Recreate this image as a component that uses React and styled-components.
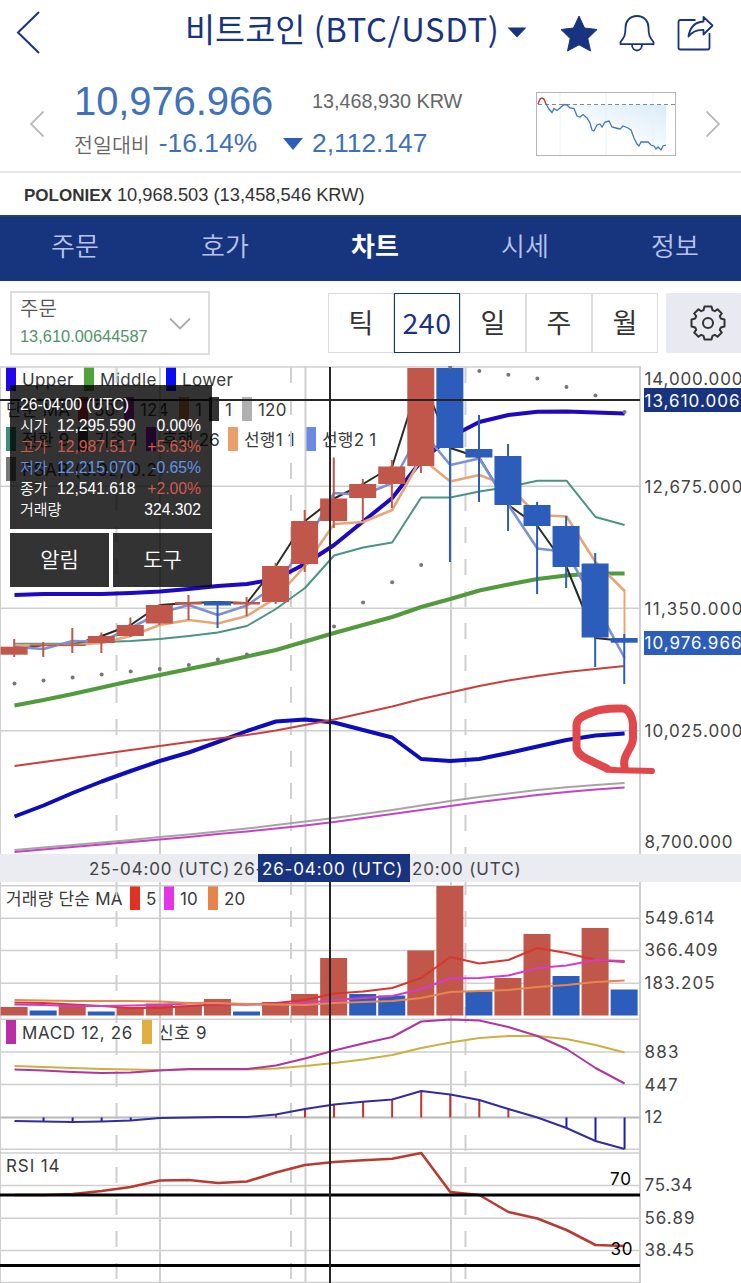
import React from 'react';
import styled, { createGlobalStyle } from 'styled-components';

const navy = '#18337f';
const up = '#c1564a';
const down = '#2c5dba';
const grid = '#cfcfcf';

const GlobalStyle = createGlobalStyle`
  * {
    box-sizing: border-box;
  }

  body {
    margin: 0;
    background: #fff;
    overflow: hidden;
    font-family: 'Liberation Sans', 'Noto Sans CJK KR', sans-serif;
  }

  svg {
    display: block;
  }
`;

// candle columns, one every 29px
const px = (i) => 14.5 + i * 29.05;
const toPoints = (ys) =>
  ys
    .map((y, i) => (y === null ? null : `${px(i).toFixed(1)},${y}`))
    .filter(Boolean)
    .join(' ');

// [open/close top, bottom, high, low, colour]
const candles = [
  [646.7, 654.7, 639, 657, up],
  [644.5, 646, 642, 657, up],
  [644.5, 646, 628, 653, up],
  [636, 643, 632.5, 653, up],
  [625, 636, 617.5, 637, up],
  [605, 623.5, 604, 625, up],
  [602, 604.5, 595, 620, up],
  [601.5, 605.5, 601, 628, down],
  [602, 604.5, 597, 616, up],
  [566, 602, 563, 604, up],
  [521, 564, 510, 572, up],
  [498.5, 521, 457.5, 528, up],
  [484, 498, 479, 520, up],
  [466.5, 484, 460, 508, up],
  [368, 466, 368, 473, up],
  [368, 448, 367, 562, down],
  [449, 457.5, 415, 502, down],
  [456, 505, 444, 531, down],
  [505, 526, 502, 594, down],
  [526, 567, 516, 588, down],
  [563.5, 637.5, 553, 667, down],
  [638, 642.7, 634, 684, down],
];

const upper = [595, 594, 594, 594, 593, 591.5, 589, 586, 584, 579, 564, 545, 521.5, 498, 461, 437, 422, 415, 411.7, 411.5, 412.5, 413.5];
const middle = [705.5, 700, 694, 687.5, 681, 675, 669, 663, 656.5, 650, 641.5, 633, 625, 617, 607, 599, 590.5, 584.5, 579, 575.5, 573.5, 573.5];
const lower = [816.5, 805.5, 793, 781.5, 771, 761, 752.5, 742, 731, 721.5, 719.5, 722.5, 730, 737.5, 759, 761, 759, 753, 746.5, 740, 735.5, 733.5];
const maRed = [766, 762, 758, 754, 750, 746, 742, 738.5, 735, 730.5, 725, 719.5, 713, 706.5, 699, 692.5, 686, 680.5, 676, 672, 669, 666];
const maGrey = [850, 847.5, 845, 842.5, 840, 837, 834.5, 831.5, 828.5, 825, 821.5, 818, 814, 810, 805.5, 801, 797, 793.5, 790, 787.3, 785, 783];
const maPink = [852, 849.5, 847, 844.5, 842, 839.5, 837, 834, 831.5, 828.5, 825.5, 822, 818, 814, 810, 806, 802, 798.5, 795, 792, 789.5, 787.5];
const teal = [643.7, 643.7, 643.5, 642, 641, 639, 636, 632.5, 626, 609, 588, 555.5, 547.5, 542.5, 497.5, 497.5, 491.5, 487, 480.7, 480.7, 517, 525];
const closeLine = [650, 645, 645, 636, 625, 605, 603, 602, 603, 566, 521, 498.5, 484, 466.5, 375, 448, 457.5, 505, 526, 567, 638, 641];
const lead2 = [647, 649, 641, 641.5, 628, 613, 605, 615, 605.5, 585, 545, 493, 495, 483, 430, 465, 458.5, 505, 548.5, 552, 604, 658];
const lead1 = [645, 645, 645, 643, 636, 625, 620, 623.5, 616, 598, 566, 524, 522, 510, 458, 481.5, 475, 486, 515, 516.5, 562, 591];
const psar = [683.5, 680.5, 677.5, 674.5, 671.5, 669, 665, 659.5, 654.5, null, null, 626.5, 602.5, 582.3, 565, 366.7, 371, 374.7, 378.5, 387, 395.5, 412];

const volumes = [
  [1007, up], [1010.5, down], [1004.5, up], [1011.5, down], [1008, up], [1003.5, up],
  [1005.5, up], [999, up], [1011.5, down], [1002, up], [994, up], [958, up],
  [994, down], [995.5, down], [950.5, up], [886, up], [991.5, down], [978, up],
  [934, up], [976, down], [928, up], [989.5, down],
];
const vol5 = [1002.5, 1003, 1004.5, 1006, 1008, 1008, 1006, 1004.5, 1004.5, 1003, 1000, 993.5, 991.5, 988, 978, 957, 963.5, 960, 948, 953, 960, 962];
const vol10 = [1004.5, 1005, 1006, 1006, 1005.5, 1005, 1003.5, 1003.5, 1004.5, 1004.5, 1003, 1000, 998, 996, 989, 978.5, 978, 975.5, 968, 965.5, 960, 961];
const vol20 = [1000, 1000.5, 1001, 1001, 1001, 1001.5, 1003, 1003, 1004, 1004.5, 1005, 1003, 1002, 1001, 998, 992, 991, 990, 987, 985, 982, 980.5];

const macd = [1069.5, 1070.5, 1072, 1073, 1072.5, 1070.5, 1069, 1069, 1069, 1065.5, 1058.5, 1050.5, 1043.5, 1037, 1021.5, 1019.5, 1020.5, 1027, 1036, 1049, 1068, 1083.5];
const signal = [1066, 1067, 1068, 1069, 1069.5, 1070, 1069.5, 1069.5, 1069.5, 1068.5, 1066, 1063, 1059.5, 1055, 1048, 1042.5, 1038, 1036, 1036, 1039, 1045, 1052.5];
const osc = [1121, 1121.5, 1122, 1121.5, 1120.5, 1118, 1117.5, 1117, 1117, 1114.5, 1109, 1104.5, 1101.7, 1099.5, 1091, 1094.5, 1100, 1109, 1117.5, 1128, 1141, 1149];
const rsi = [1195, 1195, 1194, 1191, 1187, 1180.5, 1180, 1183, 1181.5, 1172.5, 1165, 1162, 1160.3, 1158.7, 1153, 1192, 1195, 1212, 1218.5, 1230, 1245, 1246];

const Line = ({ ys, color, w = 2 }) => (
  <polyline points={toPoints(ys)} fill="none" stroke={color} strokeWidth={w} strokeLinejoin="round" />
);

const Grid = ({ rows }) => (
  <g stroke={grid} strokeWidth="2">
    {rows.map((y) => (
      <line key={y} x1="0" x2="641" y1={y} y2={y} strokeWidth="1.6" />
    ))}
    {[0, 160, 305.5, 451, 640].map((x) => (
      <line key={x} x1={x} x2={x} y1="366" y2="1283" />
    ))}
    {[116.5, 291, 465.5].map((x) => (
      <line key={x} x1={x} x2={x} y1="367" y2="1283" strokeDasharray="16 16" />
    ))}
  </g>
);

const Cross = () => <line x1="330" x2="330" y1="367" y2="1283" stroke="#262626" strokeWidth="2" />;

const Price = ({ y, w, fill = '#444', children }) => (
  <text x="644.5" y={y} fontSize="17" fill={fill} textLength={w}>
    {children}
  </text>
);

const Legend = ({ items, spacing }) => (
  <LegendRow $spacing={spacing}>
    {items.map(([color, label, width]) => (
      <LegendItem key={label + width} $width={width}>
        {color && <Swatch $color={color} />}
        {label}
      </LegendItem>
    ))}
  </LegendRow>
);

const App = () => {
  return (
    <Page>
      <GlobalStyle />
      <Header>
        <svg width="26" height="46" fill="none" stroke={navy} strokeWidth="2">
          <path d="M24 2 L3 22.500 L24 43" />
        </svg>
        <Title>
          비트코인 <span>(BTC/USDT)</span>
        </Title>
        <svg width="20" height="13" fill={navy}>
          <path d="M0.500 0.500 H19.500 L10 10.500 Z" />
        </svg>
        <HeaderIcons>
          <svg width="38" height="37" fill={navy}>
            <path
              d="M19 1 L24.500 13 L37 14.500 L27.800 23.500 L30.500 36 L19 29.800 L7.500 36 L10.200 23.500 L1 14.500 L13.500 13 Z"
              stroke={navy}
              strokeLinejoin="round"
            />
          </svg>
          <svg width="36" height="37" fill="none" stroke={navy} strokeWidth="1.8" strokeLinejoin="round">
            <path d="M18 1 C11 1 6.500 6 6.500 12.500 C6.500 20 5.500 22 1.500 27 V29.200 H34.500 V27 C30.500 22 29.500 20 29.500 12.500 C29.500 6 25 1 18 1 Z" />
            <path d="M13 29.500 C13 37.500 23 37.500 23 29.500" />
          </svg>
          <svg width="38" height="37" fill="none" stroke={navy} strokeWidth="1.8" strokeLinejoin="round">
            <path d="M18.500 5 H3.500 Q1.500 5 1.500 7 V32.500 Q1.500 34.500 3.500 34.500 H30.500 Q32.500 34.500 32.500 32.500 V18" />
            <path d="M26.500 2 L35.500 10.500 L26.500 19.500 V15 C20 14.500 15.500 16.500 11.500 21.500 C13 12 18.500 7 26.500 6.500 Z" />
          </svg>
        </HeaderIcons>
      </Header>

      <PriceBar>
        <svg width="16" height="28" fill="none" stroke="#bbb" strokeWidth="1.8">
          <path d="M14.500 1.500 L2 14 L14.500 26.500" />
        </svg>
        <PriceInfo>
          <BigPrice>10,976.966</BigPrice>
          <Krw>13,468,930 KRW</Krw>
          <Change>
            <small>전일대비</small>-16.14%
          </Change>
          <Change>
            <svg width="20" height="12" fill={down}>
              <path d="M0 0 H20 L10 12 Z" />
            </svg>
            2,112.147
          </Change>
        </PriceInfo>
        <MiniChart viewBox="0 0 140 64">
          <defs>
            <linearGradient id="fade" x1="0" x2="1" y1="1" y2="0">
              <stop offset="0.35" stopColor="#fff" />
              <stop offset="1" stopColor="#d8ebf8" />
            </linearGradient>
          </defs>
          <path d="M11 12.500 L16 20 L29 13 L42 22 L57 39 L72 30 L98 36 L103 54 L110 50 L122 57 L130 53 V12.500 Z" fill="url(#fade)" />
          <path d="M24 1 V63 M70 1 V63 M117 1 V63" stroke="#edf0f3" />
          <path d="M2 12.500 H139" stroke="#888" strokeDasharray="4 3" />
          <path d="M2 12 L4 7 L6 6 L8 7 L10 12" fill="none" stroke="#c0392b" strokeWidth="1.4" />
          <path
            d="M10 12 L13 17 L16 20.500 L18 16.500 L21 18.500 L24 16 L28 12.500 L31 13 L34 16 L38 16.500 L41 24 L44 25 L47 22.500 L51 26 L54 31 L56 38 L58 39 L61 33 L64 32 L66 35 L69 30 L73 29 L76 35 L80 36 L84 37 L87 34 L92 36 L95 38 L98 46 L101 52 L103 54 L105 50 L112 50 L115 53 L118 54 L120 57 L122 55 L125 58 L127 54 L130 53"
            fill="none"
            stroke="#3f78b5"
            strokeWidth="1.3"
          />
          <rect x="0.500" y="0.500" width="139" height="63" fill="none" stroke="#b5b5b5" />
        </MiniChart>
        <svg width="16" height="28" fill="none" stroke="#bbb" strokeWidth="1.8">
          <path d="M1.500 1.500 L14 14 L1.500 26.500" />
        </svg>
      </PriceBar>

      <Exchange>
        <b>POLONIEX</b> 10,968.503 (13,458,546 KRW)
      </Exchange>

      <Tabs>
        <Tab>주문</Tab>
        <Tab>호가</Tab>
        <Tab $active>차트</Tab>
        <Tab>시세</Tab>
        <Tab>정보</Tab>
      </Tabs>

      <Toolbar>
        <OrderSelect>
          <div>
            <OrderLabel>주문</OrderLabel>
            <OrderValue>13,610.00644587</OrderValue>
          </div>
          <svg width="22" height="13" fill="none" stroke="#aaa" strokeWidth="1.8">
            <path d="M1 1.500 L11 11.500 L21 1.500" />
          </svg>
        </OrderSelect>
        <Intervals>
          <Interval>틱</Interval>
          <Interval $active>240</Interval>
          <Interval>일</Interval>
          <Interval>주</Interval>
          <Interval>월</Interval>
        </Intervals>
        <Settings>
          <svg width="36" height="36" viewBox="-18 -18 36 36" fill="none" stroke="#333" strokeWidth="2" strokeLinejoin="round">
            <path d="M-3.500 -16.500 H3.500 L4.500 -12.800 L6.800 -11.800 L9.500 -13.800 L13.800 -9.500 L11.800 -6.800 L12.800 -4.500 L16.500 -3.500 V3.500 L12.800 4.500 L11.800 6.800 L13.800 9.500 L9.500 13.800 L6.800 11.800 L4.500 12.800 L3.500 16.500 H-3.500 L-4.500 12.800 L-6.800 11.800 L-9.500 13.800 L-13.800 9.500 L-11.800 6.800 L-12.800 4.500 L-16.500 3.500 V-3.500 L-12.800 -4.500 L-11.800 -6.800 L-13.800 -9.500 L-9.500 -13.800 L-6.800 -11.800 L-4.500 -12.800 Z" />
            <circle r="5" />
          </svg>
        </Settings>
      </Toolbar>

      <Pane $height={488}>
        <Legends>
          <Legend spacing={0.4} items={[['#2405f0', 'Upper', 78], ['#4ea33a', 'Middle', 82], ['#0a0af5', 'Lower', 80]]} />
          <Legend
            items={[
              [null, '단순 MA', 72],
              ['#e0322a', '50', 46],
              ['#b030c8', '124', 55],
              ['#e58a4a', '1', 30],
              ['#333', '1', 33],
              ['#b0b0b0', '120', 50],
            ]}
          />
          <Legend
            items={[
              ['#3c8f7c', '전환 9', 72],
              ['#444', '기준 1', 68],
              ['#a020d0', '후행 26', 82],
              ['#eaa06c', '선행1 1', 78],
              ['#6c8ae4', '선행2 1', 80],
            ]}
          />
          <Legend spacing={0.6} items={[['#777', 'PSAR (0.02, 0.2)', 200]]} />
        </Legends>
        <Plot viewBox="0 366 741 488">
          <Grid rows={[367, 486.300, 608.300, 730.700]} />
          <Line ys={maGrey} color="#a8a3a8" />
          <Line ys={maPink} color="#c445c4" />
          <Line ys={upper} color="#1f08bd" w={4} />
          <Line ys={middle} color="#519a3d" w={4} />
          <Line ys={lower} color="#0d0dba" w={4} />
          <Line ys={maRed} color="#c8403c" />
          <Line ys={teal} color="#4b9383" />
          <Line ys={closeLine} color="#2a2a26" />
          <Line ys={lead1} color="#e6a678" w={2.6} />
          <path d="M624.500 590 V642" stroke="#e6a678" strokeWidth="2" />
          <Line ys={lead2} color="#7c90d4" w={2.6} />
          {candles.map(([top, bottom, high, low, color], i) => (
            <g key={i} fill={color}>
              <rect x={px(i) - 1.3} y={high} width="2" height={low - high} />
              <rect x={px(i) - 13.9} y={top} width="27" height={bottom - top} />
            </g>
          ))}
          {psar.map((y, i) => y && <circle key={i} cx={px(i)} cy={y} r="2" fill="#777" />)}
          <path d="M0 400 H640" stroke="#262626" strokeWidth="2" />
          <Cross />
          <Price y="385" w="98">14,000.000</Price>
          <rect x="644" y="388" width="97" height="24" fill={navy} />
          <Price y="406.500" w="95" fill="#fff">13,610.006</Price>
          <Price y="493" w="98">12,675.000</Price>
          <Price y="615" w="98">11,350.000</Price>
          <rect x="644" y="631" width="97" height="24" fill={down} />
          <Price y="649" w="97" fill="#fff">10,976.966</Price>
          <Price y="737" w="98">10,025.000</Price>
          <Price y="848" w="88">8,700.000</Price>
          <g fill="none" stroke="#e0484c" strokeLinecap="round" strokeLinejoin="round">
            <path
              d="M624.500 767 C622 754 633 749 633 738 V724 C632 714 627 708.500 623 708.500 C608 708 598 709.500 592 712.500 C583 716 577 718 576.500 725 L576.500 748 C578 757 590 760 607 768.500"
              strokeWidth="8"
            />
            <path d="M607 769.500 C622 771 636 770 652 771" strokeWidth="6" />
          </g>
        </Plot>
      </Pane>

      <TimeAxis>
        <Stamp $start={89} $width={144}>25-04:00 (UTC)</Stamp>
        <Stamp $width={25}>26-</Stamp>
        <Stamp $width={152} $active>26-04:00 (UTC)</Stamp>
        <Stamp $start={2} $width={120}>20:00 (UTC)</Stamp>
      </TimeAxis>

      <Pane $height={136}>
        <Legends $top={4}>
          <Legend
            items={[[null, '거래량 단순 MA', 124], ['#e03222', '5', 34], ['#e535e8', '10', 44], ['#e5854c', '20', 50]]}
          />
        </Legends>
        <Plot viewBox="0 882 741 136">
          <Grid rows={[885.700, 918.300, 950.500, 983.300]} />
          {volumes.map(([top, color], i) => (
            <rect key={i} x={px(i) - 13.9} y={top} width="27" height={1015.5 - top} fill={color} />
          ))}
          <Line ys={vol5} color="#d8362f" />
          <Line ys={vol10} color="#d53cc6" />
          <Line ys={vol20} color="#e5884c" />
          <Cross />
          <Price y="923.500" w="70">549.614</Price>
          <Price y="956" w="73">366.409</Price>
          <Price y="989" w="70">183.205</Price>
        </Plot>
      </Pane>

      <Pane $height={133}>
        <Legends $top={2}>
          <Legend spacing={0.65} items={[['#bb2fa6', 'MACD 12, 26', 136], ['#dfb041', '신호 9', 80]]} />
        </Legends>
        <Plot viewBox="0 1018 741 133">
          <Grid rows={[1019.300, 1052, 1084.500, 1117.500, 1149.300]} />
          <path d="M0 1117.500 H640" stroke="#bdbdbd" strokeWidth="2" />
          <Line ys={signal} color="#cfae42" />
          <Line ys={macd} color="#b0359f" />
          {osc.map((y, i) => {
            if (Math.abs(y - 1117.5) < 1.5 || i === 0) return null;
            return <path key={i} d={`M${px(i)} 1117.500 V${y}`} stroke={y < 1117 ? '#c8322c' : '#1c1cae'} strokeWidth="2" />;
          })}
          <Line ys={osc} color="#332c9c" />
          <Cross />
          <Price y="1058" w="34">883</Price>
          <Price y="1090.500" w="33">447</Price>
          <Price y="1123" w="18">12</Price>
        </Plot>
      </Pane>

      <Pane $height={132}>
        <Legends $top={2}>
          <Legend spacing={0.9} items={[[null, 'RSI 14', 80]]} />
        </Legends>
        <Plot viewBox="0 1151 741 132">
          <Grid rows={[1153, 1185.500, 1218.200, 1250.500, 1282.500]} />
          <Line ys={rsi} color="#b93a33" w={2.6} />
          <path d="M0 1195 H640 M0 1265.500 H640" stroke="#000" strokeWidth="3" />
          <Cross />
          <text x="610" y="1185" fontSize="17" textLength="21">70</text>
          <text x="610.500" y="1255" fontSize="17" textLength="22">30</text>
          <Price y="1191" w="48">75.34</Price>
          <Price y="1224" w="50">56.89</Price>
          <Price y="1256" w="49.500">38.45</Price>
        </Plot>
      </Pane>

      <Overlay>
        <Quote>
          <QuoteDate>26-04:00 (UTC)</QuoteDate>
          <QuoteRow>
            <span>시가</span>
            <span>12,295.590</span>
            <span>0.00%</span>
          </QuoteRow>
          <QuoteRow $color="#cf5a4b">
            <span>고가</span>
            <span>12,987.517</span>
            <span>+5.63%</span>
          </QuoteRow>
          <QuoteRow $color="#6293e6">
            <span>저가</span>
            <span>12,215.070</span>
            <span>-0.65%</span>
          </QuoteRow>
          <QuoteRow>
            <span>종가</span>
            <span>12,541.618</span>
            <Rise>+2.00%</Rise>
          </QuoteRow>
          <QuoteRow>
            <span>거래량</span>
            <span />
            <span>324.302</span>
          </QuoteRow>
        </Quote>
        <OverlayButtons>
          <OverlayButton>알림</OverlayButton>
          <OverlayButton>도구</OverlayButton>
        </OverlayButtons>
      </Overlay>
    </Page>
  );
};

const Page = styled.div`
  position: relative;
  width: 741px;
  height: 1283px;
  overflow: hidden;
  background: #fff;
  color: #333;
`;

const Header = styled.header`
  display: flex;
  align-items: center;
  height: 66px;
  padding-left: 15px;
`;

const Title = styled.h1`
  width: 313px;
  margin: 0 9px 11px 144px;
  color: ${navy};
  font: 400 32.7px/46px 'Noto Sans CJK KR', sans-serif;
  white-space: nowrap;

  span {
    margin-left: 1px;
    letter-spacing: 0.7px;
  }
`;

const HeaderIcons = styled.div`
  display: flex;
  gap: 21.5px;
  margin-left: 32.5px;
`;

const PriceBar = styled.section`
  display: flex;
  align-items: center;
  height: 107px;
  padding: 10px 0 0 29px;
  border-bottom: 2px solid #e8e8e8;
`;

const PriceInfo = styled.div`
  display: grid;
  grid-template-columns: 209px 200px;
  grid-template-rows: 50px 34px;
  align-items: center;
  width: 420px;
  height: 88px;
  margin: -6px 42px 0 29px;
  white-space: nowrap;
`;

const BigPrice = styled.div`
  color: #3f72bb;
  font-size: 40px;
  letter-spacing: -0.1px;
`;

const Krw = styled.div`
  padding-left: 29px;
  color: #666;
  font-size: 19.8px;
`;

const Change = styled.div`
  display: flex;
  align-items: center;
  gap: 9px;
  color: #3f72b5;
  font-size: 26.4px;

  small {
    color: #666;
    font: 350 20.6px 'Noto Sans CJK KR', sans-serif;
  }
`;

const MiniChart = styled.svg`
  width: 140px;
  height: 64px;
  margin-right: 29px;
`;

const Exchange = styled.div`
  height: 42px;
  padding-left: 24px;
  font-size: 18.3px;
  line-height: 44px;
  white-space: pre;

  b {
    font-size: 17px;
  }
`;

const Tabs = styled.nav`
  display: grid;
  grid-template-columns: repeat(5, 150px);
  height: 66px;
  background: #17347f;
  box-shadow: inset 0 2px #26406f;
`;

const Tab = styled.div`
  color: ${(p) => (p.$active ? '#fff' : '#b9c4ee')};
  font: ${(p) => (p.$active ? 700 : 350)} 26px/60px 'Noto Sans CJK KR', sans-serif;
  text-align: center;
`;

const Toolbar = styled.div`
  display: flex;
  height: 85px;
  padding: 10px 0 0 10px;
`;

const OrderSelect = styled.div`
  display: flex;
  align-items: center;
  justify-content: space-between;
  width: 200px;
  height: 64px;
  padding: 0 17px 0 8px;
  border: 2px solid #ddd;
`;

const OrderLabel = styled.div`
  color: #555;
  font: 350 20px/27px 'Noto Sans CJK KR', sans-serif;
`;

const OrderValue = styled.div`
  color: #4f9468;
  font-size: 16.4px;
  line-height: 31px;
`;

const Intervals = styled.div`
  display: flex;
  height: 60px;
  margin: 2px 8px 0 118px;
`;

const Interval = styled.div`
  width: 66px;
  border: ${(p) => (p.$active ? `1.5px solid ${navy}` : '1px solid #dcdcdc')};
  color: ${(p) => (p.$active ? navy : '#333')};
  font: 400 ${(p) => (p.$active ? 28.5 : 27)}px/56px 'Noto Sans CJK KR', sans-serif;
  letter-spacing: ${(p) => (p.$active ? 0.5 : 0)}px;
  text-align: center;
`;

const Settings = styled.div`
  display: flex;
  flex: 1;
  align-items: center;
  height: 60px;
  margin-top: 2px;
  padding-left: 24px;
  background: #e8e9f1;
`;

const Pane = styled.section`
  position: relative;
  height: ${(p) => p.$height}px;
`;

const Plot = styled.svg`
  position: relative;
  width: 741px;
  height: 100%;
  font-family: Inter, sans-serif;
`;

const Legends = styled.div`
  position: absolute;
  top: ${(p) => p.$top ?? 1}px;
  left: 6px;
`;

const LegendRow = styled.div`
  display: flex;
  height: 30px;
  letter-spacing: ${(p) => p.$spacing ?? 0.2}px;
`;

const LegendItem = styled.div`
  display: flex;
  gap: 6px;
  width: ${(p) => p.$width}px;
  height: 27px;
  color: #3a3a3a;
  font: 17px/27px Inter, 'Noto Sans CJK KR', sans-serif;
  white-space: nowrap;
`;

const Swatch = styled.i`
  flex: none;
  width: 10px;
  height: 24px;
  background: ${(p) => p.$color};
`;

const TimeAxis = styled.div`
  display: flex;
  height: 28px;
  background: #eaecf2;
`;

const Stamp = styled.div`
  width: ${(p) => p.$width}px;
  margin-left: ${(p) => p.$start ?? 0}px;
  padding-left: ${(p) => (p.$active ? 4 : 0)}px;
  overflow: hidden;
  background: ${(p) => (p.$active ? navy : 'none')};
  color: ${(p) => (p.$active ? '#fff' : '#444')};
  font: 17px/31px Inter, sans-serif;
  letter-spacing: 0.85px;
  white-space: nowrap;
`;

const Overlay = styled.aside`
  position: absolute;
  top: 385px;
  left: 10px;
  width: 202px;
`;

const Quote = styled.div`
  height: 144px;
  padding: 9px 11px 0 10px;
  background: rgba(0, 0, 0, 0.8);
  color: #fff;
  font: 350 15.7px/21px 'Liberation Sans', 'Noto Sans CJK KR', sans-serif;
`;

const QuoteDate = styled.div`
  height: 21px;
`;

const QuoteRow = styled.div`
  display: grid;
  grid-template-columns: 37px 82px 1fr;
  height: 21px;
  color: ${(p) => p.$color ?? '#fff'};
  white-space: nowrap;

  span:first-child {
    font-size: 15px;
  }

  span:last-child {
    text-align: right;
  }
`;

const Rise = styled.span`
  color: #d05a50;
`;

const OverlayButtons = styled.div`
  display: flex;
  gap: 4px;
  margin-top: 4px;
`;

const OverlayButton = styled.div`
  flex: 1;
  height: 54px;
  background: rgba(0, 0, 0, 0.8);
  color: #fff;
  font: 350 21px/51px 'Noto Sans CJK KR', sans-serif;
  text-align: center;
`;

export default App;
